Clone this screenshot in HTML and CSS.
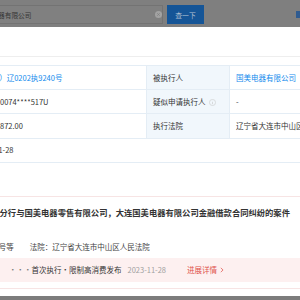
FILE: index.html
```html
<!DOCTYPE html>
<html lang="zh-CN">
<head>
<meta charset="utf-8">
<title>被执行人详情</title>
<link rel="stylesheet" href="styles.css">
</head>
<body>
  <div class="topbar">
    <div class="search-input">
      <span class="q">国美电器有限公司</span>
      <svg class="clear" viewBox="0 0 8 8" width="7" height="7"><circle cx="4" cy="4" r="4" fill="#a2a2a2"/><path d="M2.6 2.6L5.4 5.4M5.4 2.6L2.6 5.4" stroke="#7e7e7e" stroke-width="0.9"/></svg>
    </div>
    <button class="btn">查一下</button>
    <div class="sliver"></div>
  </div>

  <div class="modal">
    <div class="modal-head">被执行人详情</div>
    <div class="modal-body">
      <table class="info">
        <colgroup>
          <col class="c1"><col class="c2"><col class="c3"><col class="c4">
        </colgroup>
        <tr>
          <td class="label">案号</td>
          <td class="link">（2023）辽0202执9240号</td>
          <td class="label">被执行人</td>
          <td class="link">国美电器有限公司</td>
        </tr>
        <tr>
          <td class="label">证件号码</td>
          <td>9121020074****517U</td>
          <td class="label">疑似申请执行人<svg class="info-ic" viewBox="0 0 8 8" width="7" height="7"><circle cx="4" cy="4" r="3.5" fill="none" stroke="#c4c4c4" stroke-width="0.6"/><path d="M4 3.5V5.9" stroke="#c4c4c4" stroke-width="0.7"/><circle cx="4" cy="2.3" r="0.4" fill="#c4c4c4"/></svg></td>
          <td>-</td>
        </tr>
        <tr>
          <td class="label">执行标的</td>
          <td>12,345,872.00</td>
          <td class="label">执行法院</td>
          <td>辽宁省大连市中山区人民法院</td>
        </tr>
        <tr>
          <td class="label">立案日期</td>
          <td colspan="3">2023-11-28</td>
        </tr>
      </table>

      <div class="sec-title">相关案件</div>

      <div class="case">
        <div class="case-title">中国银行股份有限公司大连分行与国美电器零售有限公司，大连国美电器有限公司金融借款合同纠纷的案件</div>
        <div class="case-meta">
          <span>案号：（2023）辽0202执9240号等</span>
          <span>法院：辽宁省大连市中山区人民法院</span>
        </div>
        <div class="case-bar">
          <span class="bar-label">最新进展</span>
          <span class="dots">···</span>
          <span class="step">首次执行·限制高消费发布</span>
          <span class="date">2023-11-28</span>
          <span class="more">进展详情<svg class="chev" viewBox="0 0 6 8" width="4" height="6"><path d="M1.2 0.8L4.6 4L1.2 7.2" fill="none" stroke="#e0524c" stroke-width="1.1"/></svg></span>
        </div>
      </div>
    </div>
  </div>
</body>
</html>
```

FILE: styles.css
```css
html, body {
  margin: 0;
  padding: 0;
}

body {
  width: 300px;
  height: 300px;
  overflow: hidden;
  background: #7c7c7c;
  font-family: "Noto Sans CJK SC", "Noto Sans", sans-serif;
}

.topbar {
  height: 27px;
  box-sizing: border-box;
  padding-top: 5px;
  display: flex;
  align-items: flex-start;
  background: #7f7f7f;
}

.search-input {
  margin-left: -45px;
  width: 208px;
  height: 19px;
  box-sizing: border-box;
  border: 1px solid #737373;
  background: #808080;
  display: flex;
  align-items: center;
  padding-left: 22px;
  padding-right: 0.5px;
}

.q {
  flex: 1;
  font-size: 6.7px;
  color: #363636;
  white-space: nowrap;
}

.clear {
  display: block;
  flex: none;
}

.btn {
  margin-left: 4px;
  width: 37px;
  height: 19px;
  border: 0;
  padding: 0;
  background: #155597;
  color: #b3c1d3;
  font-family: "Noto Sans CJK SC", sans-serif;
  font-size: 6.8px;
}

.sliver {
  margin-left: auto;
  margin-right: -6px;
  margin-top: 6px;
  width: 10px;
  height: 7px;
  background: #2f5b90;
}

.modal {
  margin-left: -125px;
  width: 630px;
  height: 269px;
  background: #fff;
}

.modal-head {
  height: 29px;
  border-bottom: 1px solid #eeeeee;
  padding-left: 16px;
  display: flex;
  align-items: center;
  font-size: 8.5px;
  font-weight: bold;
  color: #333;
}

.modal-body {
  padding: 8px 16px 0;
}

.info {
  border-collapse: collapse;
  table-layout: fixed;
  width: 598px;
  font-size: 7.5px;
  color: #333;
}

.c1 { width: 77px; }
.c2 { width: 178px; }
.c3 { width: 83px; }
.c4 { width: 260px; }

.info td {
  border: 1px solid #e4edf5;
  padding: 5.6px 6px;
  line-height: 12px;
  white-space: nowrap;
  overflow: hidden;
}

.info td.label {
  background: #f1f7fc;
  color: #333;
}

.info td.link {
  color: #128bed;
}

.info-ic {
  vertical-align: -1px;
  margin-left: 3px;
}

.sec-title {
  height: 33px;
  line-height: 33px;
  font-size: 8.5px;
  font-weight: bold;
  color: #333;
}

.case {
  border: 1px solid #f7e4e4;
  padding: 9px 8px 6px;
  background: #fff;
}

.case-title {
  font-size: 8.3px;
  font-weight: bold;
  line-height: 12px;
  color: #333;
  white-space: nowrap;
}

.case-meta {
  margin-top: 23px;
  display: flex;
  gap: 16px;
  font-size: 7.5px;
  line-height: 12px;
  color: #444;
  white-space: nowrap;
}

.case-bar {
  margin-top: 5px;
  height: 24px;
  background: #fdf0f0;
  display: flex;
  align-items: center;
  font-size: 7.5px;
  white-space: nowrap;
}

.bar-label {
  flex: 0 0 109px;
  color: #999;
}

.dots {
  flex: 0 0 18px;
  color: #777;
}

.step {
  color: #333;
}

.date {
  margin-left: 6px;
  color: #a0a0a0;
}

.more {
  margin-left: 21px;
  color: #e0524c;
  display: flex;
  align-items: center;
  gap: 3px;
}

.chev {
  display: block;
}
```
